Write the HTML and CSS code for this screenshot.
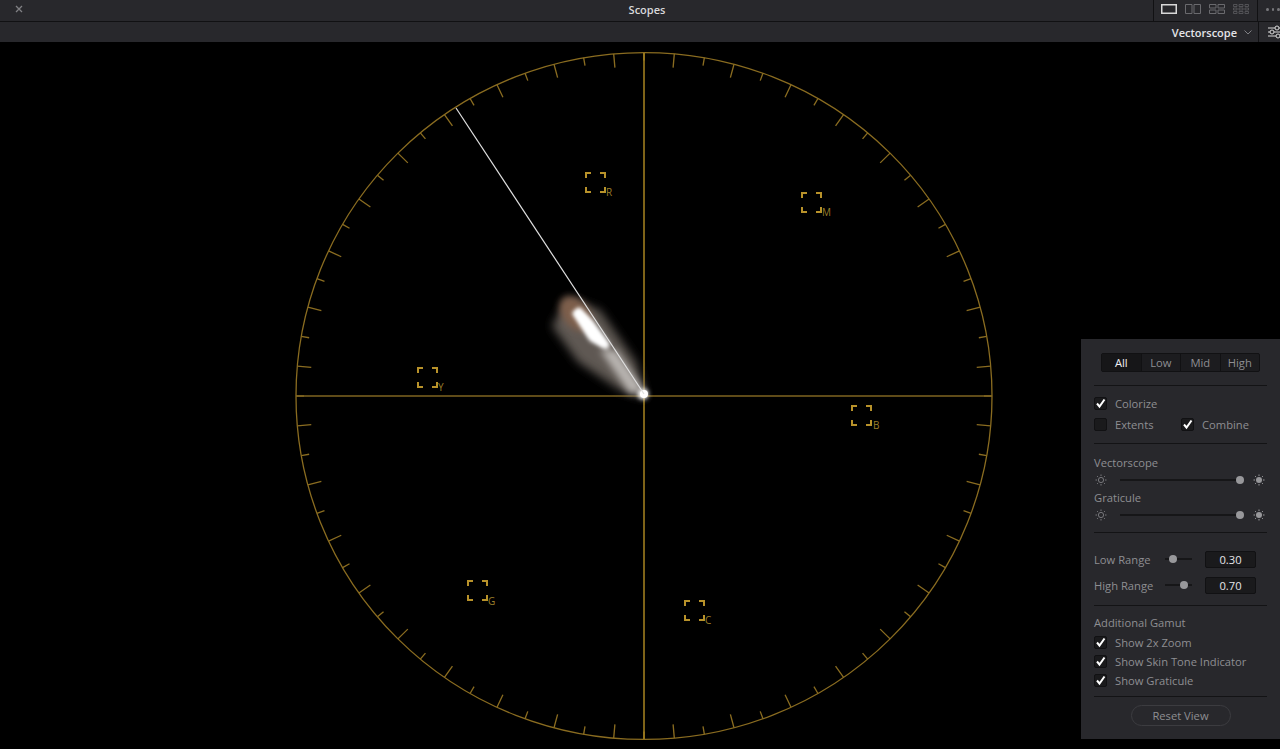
FILE: index.html
```html
<!DOCTYPE html>
<html>
<head>
  <title>Scopes</title>
  <link rel="stylesheet" href="styles.css">
</head>
<body>
  <svg class="defs" width="0" height="0">
    <symbol id="target" viewBox="0 0 21 21">
      <path d="M1 6V1H6M15 1H20V6M1 15V20H6M15 20H20V15" fill="none" stroke="#b8922a" stroke-width="2"/>
    </symbol>
    <symbol id="sun_dim" viewBox="0 0 12 12">
      <circle cx="6" cy="6" r="2.6" fill="none" stroke="#77777b"/>
      <path d="M6 .5V2M6 10V11.500M.5 6H2M10 6H11.500M2.100 2.100L3.100 3.100M8.900 8.900L9.900 9.900M2.100 9.900L3.100 8.900M8.900 3.100L9.900 2.100" stroke="#77777b"/>
    </symbol>
    <symbol id="sun_bright" viewBox="0 0 12 12">
      <circle cx="6" cy="6" r="3" fill="#98989b"/>
      <path d="M6 .5V2M6 10V11.500M.5 6H2M10 6H11.500M2.100 2.100L3.100 3.100M8.900 8.900L9.900 9.900M2.100 9.900L3.100 8.900M8.900 3.100L9.900 2.100" stroke="#98989b"/>
    </symbol>
    <symbol id="tick" viewBox="0 0 13 13">
      <path d="M3 6.500L5.500 9.500L10.500 2.500" fill="none" stroke="#fff" stroke-width="2"/>
    </symbol>
  </svg>

  <header>
    <div class="title_bar">
      <div class="title_left">
        <svg class="close_icon" viewBox="0 0 8 8"><path d="M1 1L7 7M7 1L1 7" stroke="#808084" stroke-width="1.300"/></svg>
      </div>
      <div class="title">Scopes</div>
      <div class="title_right">
        <div class="view_icons">
          <svg viewBox="0 0 16 10"><rect x=".75" y=".75" width="14.500" height="8.500" fill="none" stroke="#d8d8d8" stroke-width="1.500"/></svg>
          <svg viewBox="0 0 16 10"><path d="M.5 .5H7V9.500H.5ZM9 .5H15.500V9.500H9Z" fill="none" stroke="#6a6a6e"/></svg>
          <svg viewBox="0 0 16 10"><path d="M.5 .5H7V4H.5ZM9 .5H15.500V4H9ZM.5 6H7V9.500H.5ZM9 6H15.500V9.500H9Z" fill="none" stroke="#6a6a6e"/></svg>
          <svg viewBox="0 0 16 10"><path d="M.5 .5H4V2.500H.5ZM6 .5H10V2.500H6ZM12 .5H15.500V2.500H12ZM.5 4H4V6H.5ZM6 4H10V6H6ZM12 4H15.500V6H12ZM.5 7.500H4V9.500H.5ZM6 7.500H10V9.500H6ZM12 7.500H15.500V9.500H12Z" fill="none" stroke="#5c5c60" stroke-width=".8"/></svg>
        </div>
        <div class="more_dots"><i></i><i></i><i></i></div>
      </div>
    </div>
    <div class="tool_bar">
      <div class="scope_select">
        <span>Vectorscope</span>
        <svg class="chevron" viewBox="0 0 8 5"><path d="M.5 .5L4 4L7.500 .5" fill="none" stroke="#808084"/></svg>
      </div>
      <div class="settings">
        <svg viewBox="0 0 14 14"><path d="M0 3H14M0 7H14M0 11H14" stroke="#d8d8d8"/><circle cx="9" cy="3" r="2" fill="#28282c" stroke="#d8d8d8"/><circle cx="4" cy="7" r="2" fill="#28282c" stroke="#d8d8d8"/><circle cx="10" cy="11" r="2" fill="#28282c" stroke="#d8d8d8"/></svg>
      </div>
    </div>
  </header>

  <main>
    <svg class="scope" viewBox="0 42 1280 707">
      <defs>
        <filter id="blur_wide" x="-50%" y="-50%" width="200%" height="200%"><feGaussianBlur stdDeviation="5"/></filter>
        <filter id="blur_mid" x="-50%" y="-50%" width="200%" height="200%"><feGaussianBlur stdDeviation="3.500"/></filter>
        <filter id="blur_tight" x="-50%" y="-50%" width="200%" height="200%"><feGaussianBlur stdDeviation="2.200"/></filter>
      </defs>

      <!-- graticule: the dashes of a wide stroke make the ticks -->
      <g transform="translate(644 396) scale(1 .987)" fill="none" stroke="#8a6c20">
        <circle r="348" stroke-width="1.300"/>
        <circle r="341" pathLength="360" stroke-width="14" stroke-dasharray=".22 9.780" stroke-dashoffset="-4.890"/>
        <circle r="344" pathLength="360" stroke-width="8" stroke-dasharray=".22 9.780" stroke-dashoffset=".11"/>
      </g>
      <path d="M296 396H992" stroke="#7f6420" stroke-width="1.500"/>
      <path d="M644 53V739" stroke="#a98420" stroke-width="1.500"/>

      <use href="#target" x="585" y="172" width="21" height="21"/>
      <use href="#target" x="801" y="192" width="21" height="21"/>
      <use href="#target" x="417" y="367" width="21" height="21"/>
      <use href="#target" x="851" y="405" width="21" height="21"/>
      <use href="#target" x="467" y="580" width="21" height="21"/>
      <use href="#target" x="684" y="600" width="21" height="21"/>
      <g class="target_label">
        <text x="606" y="196">R</text>
        <text x="822" y="216">M</text>
        <text x="438" y="391">Y</text>
        <text x="873" y="429">B</text>
        <text x="488" y="605">G</text>
        <text x="705" y="624">C</text>
      </g>

      <!-- trace -->
      <polygon points="552,326 568,298 600,310 636,362 646,398 620,390 578,362" fill="#5e5852" filter="url(#blur_wide)"/>
      <ellipse cx="576" cy="314" rx="20" ry="13" transform="rotate(50 576 314)" fill="#7e5f4c" filter="url(#blur_mid)"/>
      <polygon points="600,350 616,350 644,390 630,394" fill="#b8b4b0" filter="url(#blur_mid)"/>
      <polygon points="572,313 579,307 592,320 610,344 607,350 590,341" fill="#fff" filter="url(#blur_tight)"/>
      <polygon points="574,313 579,309 591,322 606,344 604,347 590,337" fill="#fff" filter="url(#blur_tight)"/>
      <circle cx="643" cy="394" r="5.500" fill="#fff" filter="url(#blur_tight)"/>
      <circle cx="644" cy="394" r="4" fill="#fff"/>
      <path d="M456 108L644 394" stroke="#e0e0e0" stroke-width="1.200"/>
    </svg>

    <aside class="panel">
      <section class="panel_section range_section">
        <div class="segmented">
          <button class="active">All</button>
          <button>Low</button>
          <button>Mid</button>
          <button>High</button>
        </div>
      </section>

      <section class="panel_section colorize_section">
        <div class="check_row">
          <label class="check"><span class="box"><svg><use href="#tick"/></svg></span>Colorize</label>
        </div>
        <div class="check_row">
          <label class="check extents"><span class="box"></span>Extents</label>
          <label class="check"><span class="box"><svg><use href="#tick"/></svg></span>Combine</label>
        </div>
      </section>

      <section class="panel_section brightness_section">
        <div class="field_label">Vectorscope</div>
        <div class="brightness">
          <svg class="sun"><use href="#sun_dim"/></svg>
          <div class="slider"><i class="thumb thumb_full"></i></div>
          <svg class="sun"><use href="#sun_bright"/></svg>
        </div>
        <div class="field_label">Graticule</div>
        <div class="brightness">
          <svg class="sun"><use href="#sun_dim"/></svg>
          <div class="slider"><i class="thumb thumb_full"></i></div>
          <svg class="sun"><use href="#sun_bright"/></svg>
        </div>
      </section>

      <section class="panel_section values_section">
        <div class="value_row">
          <span class="value_name">Low Range</span>
          <div class="slider short"><i class="thumb thumb_low"></i></div>
          <span class="value_box">0.30</span>
        </div>
        <div class="value_row">
          <span class="value_name">High Range</span>
          <div class="slider short"><i class="thumb thumb_high"></i></div>
          <span class="value_box">0.70</span>
        </div>
      </section>

      <section class="panel_section gamut_section">
        <div class="field_label">Additional Gamut</div>
        <div class="gamut_row"><label class="check"><span class="box"><svg><use href="#tick"/></svg></span>Show 2x Zoom</label></div>
        <div class="gamut_row"><label class="check"><span class="box"><svg><use href="#tick"/></svg></span>Show Skin Tone Indicator</label></div>
        <div class="gamut_row"><label class="check"><span class="box"><svg><use href="#tick"/></svg></span>Show Graticule</label></div>
      </section>

      <div class="reset_row">
        <button class="reset">Reset View</button>
      </div>
    </aside>
  </main>
</body>
</html>
```

FILE: styles.css
```css
* {
  box-sizing: border-box;
}

html, body {
  height: 100%;
}

body {
  margin: 0;
  background-color: #000;
  color: #8e8e92;
  font-family: "Open Sans", sans-serif;
  font-size: 11.2px;
  overflow: hidden;
}

button {
  font-family: inherit;
  font-size: inherit;
  color: inherit;
}

.defs {
  position: absolute;
}

/* Top bars */
.title_bar, .tool_bar {
  background-color: #28282c;
}

.title_bar {
  display: grid;
  grid-template-columns: 1fr auto 1fr;
  align-items: stretch;
  height: 22px;
  padding-left: 14px;
  border-bottom: 1px solid #111113;
}

.title_left {
  display: flex;
  align-items: center;
}

.close_icon {
  width: 8px;
  height: 8px;
  margin: -4px 0 0 1px;
}

.title {
  color: #d8d8da;
  font-size: 11px;
  font-weight: 600;
  line-height: 19px;
}

.title_right {
  display: flex;
  justify-content: flex-end;
}

.view_icons {
  display: flex;
  align-items: center;
  gap: 8px;
  height: 21px;
  padding: 0 8px 4px 7px;
  border-left: 1px solid #111113;
  border-right: 1px solid #111113;
}

.view_icons svg {
  width: 16px;
  height: 10px;
}

.more_dots {
  display: flex;
  gap: 3px;
  width: 22px;
  padding: 8px 0 0 8px;
}

.more_dots i {
  width: 3px;
  height: 3px;
  border-radius: 50%;
  background-color: #77777b;
}

.tool_bar {
  display: flex;
  justify-content: flex-end;
  align-items: center;
  height: 20px;
}

.scope_select {
  display: flex;
  align-items: center;
  color: #e4e4e8;
  font-size: 11px;
  font-weight: 600;
  padding-right: 6px;
}

.chevron {
  width: 8px;
  height: 5px;
  margin-left: 7px;
}

.settings {
  width: 22px;
  height: 20px;
  padding: 3px 0 0 9px;
  border-left: 1px solid #111113;
  overflow: hidden;
}

.settings svg {
  width: 14px;
  height: 14px;
}

/* Scope */
main {
  position: relative;
  height: 707px;
}

.scope {
  display: block;
  width: 1280px;
  height: 707px;
}

.target_label {
  fill: #9a7e2a;
  font-size: 10px;
}

/* Side panel */
.panel {
  position: absolute;
  top: 297px;
  right: 0;
  width: 199px;
  padding: 0 13px 13px;
  background-color: #28282c;
}

.panel_section {
  border-bottom: 1px solid #131315;
}

.range_section {
  padding: 14px 7px 13px;
}

.segmented {
  display: flex;
  height: 19px;
  background-color: #1c1c1f;
  border: 1px solid #111113;
  border-radius: 2px;
}

.segmented button {
  flex: 1;
  padding: 0;
  border: 0;
  border-left: 1px solid #111113;
  background: none;
  line-height: 16px;
}

.segmented button:first-child {
  border-left: 0;
}

.segmented .active {
  color: #f0f0f2;
  background-color: #161618;
}

.colorize_section {
  padding: 7px 0 8px;
}

.check_row {
  display: flex;
  align-items: center;
  height: 21px;
}

.check {
  display: flex;
  align-items: center;
  gap: 8px;
}

.extents {
  width: 87px;
}

.box {
  width: 13px;
  height: 13px;
  background-color: #1a1a1c;
  border: 1px solid #111113;
  border-radius: 2px;
}

.box svg {
  display: block;
  width: 13px;
  height: 13px;
  margin: -1px;
}

.brightness_section {
  padding: 10px 0 8px;
}

.field_label {
  height: 17px;
  line-height: 17px;
}

.brightness {
  display: flex;
  align-items: center;
  height: 18px;
  padding: 0 2px 0 1px;
}

.sun {
  width: 12px;
  height: 12px;
}

.slider {
  position: relative;
  flex: 1;
  height: 2px;
  margin: 0 13px;
  background-color: #161618;
}

.thumb {
  position: absolute;
  top: -3px;
  width: 8px;
  height: 8px;
  border-radius: 50%;
  background-color: #98989b;
}

.thumb_full {
  right: -4px;
}

.values_section {
  padding: 13px 0 7px;
}

.value_row {
  display: flex;
  align-items: center;
  height: 26px;
}

.value_name {
  width: 71px;
}

.slider.short {
  flex: 0 0 27px;
  margin: 0 13px 0 0;
}

.thumb_low {
  left: 4px;
}

.thumb_high {
  left: 15px;
}

.value_box {
  width: 51px;
  height: 17px;
  line-height: 16px;
  text-align: center;
  color: #e4e4e8;
  background-color: #1a1a1c;
  border: 1px solid #111113;
  border-radius: 2px;
}

.gamut_section {
  padding: 8px 0 6px;
}

.gamut_section .field_label {
  height: 19px;
}

.gamut_row {
  display: flex;
  align-items: center;
  height: 19px;
}

.reset_row {
  display: flex;
  justify-content: center;
  padding: 8px 0 0 0;
}

.reset {
  width: 100px;
  height: 21px;
  padding: 0;
  background: none;
  border: 1px solid #3c3c40;
  border-radius: 11px;
}
```
